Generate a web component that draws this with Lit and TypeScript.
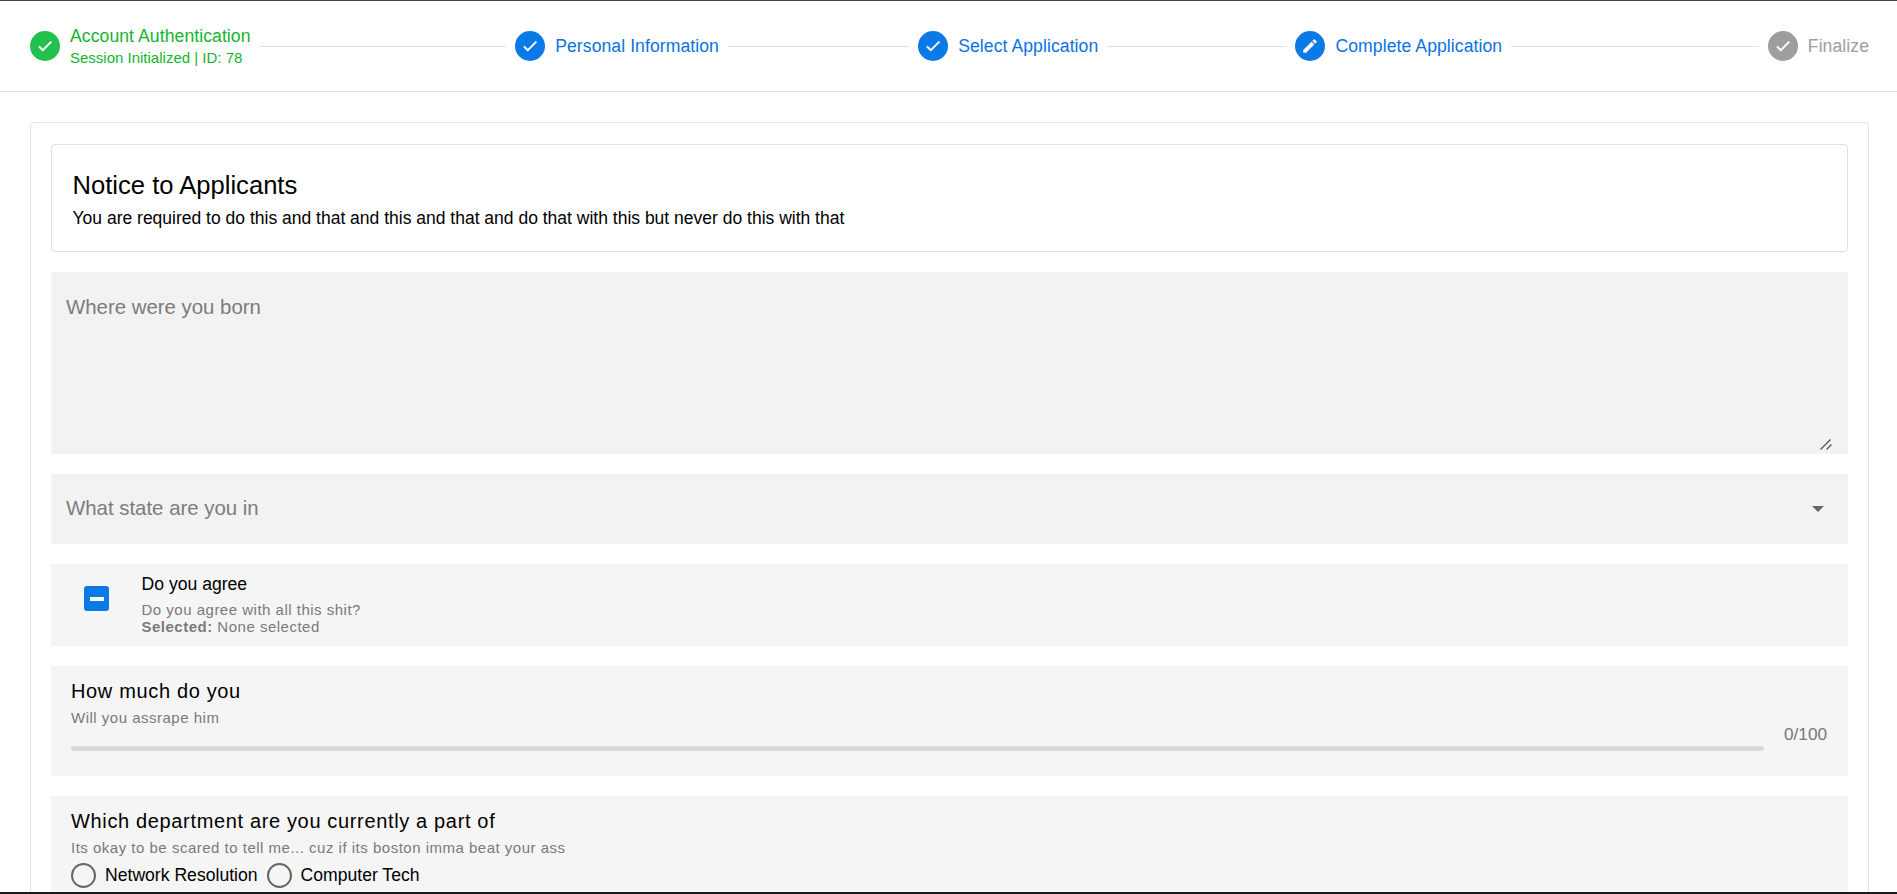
import { LitElement, html, css } from "lit";
import { customElement } from "lit/decorators.js";

const CHECK = html`<svg viewBox="0 0 24 24" width="18" height="18"><path fill="#fff" stroke="#fff" stroke-width="0.8" d="M9 16.2 4.8 12l-1.4 1.4L9 19 21 7l-1.4-1.4z"/></svg>`;
const PEN = html`<svg viewBox="0 0 24 24" width="18" height="18"><path fill="#fff" d="M3 17.25V21h3.75L17.81 9.94l-3.75-3.75zM20.71 7.04a1 1 0 0 0 0-1.41l-2.34-2.34a1 1 0 0 0-1.41 0l-1.83 1.83 3.75 3.75z"/></svg>`;
const GRIP = html`<svg class="grip" viewBox="0 0 12 11" width="12" height="11"><path fill="none" stroke="#555" stroke-width="1.3" d="M0.5 10.5 10.5 0.5M6.5 10.5 11.5 5.5"/></svg>`;

@customElement("app-root")
export class AppRoot extends LitElement {
  static styles = css`
    :host { display: flex; flex-direction: column; height: 894px; overflow: hidden; background: #fff; color: #000; font-family: "Liberation Sans", Arial, sans-serif; box-sizing: border-box; border-top: 1px solid #444; border-bottom: 2px solid #1a1a1a; }
    * { box-sizing: border-box; }
    .stepper { flex: none; height: 91px; display: flex; align-items: center; padding: 0 28px 0 30px; border-bottom: 1px solid #e0e0e0; }
    .step { display: flex; align-items: center; gap: 10px; flex: none; font-size: 17.6px; letter-spacing: 0.07px; }
    .icon { width: 30px; height: 30px; border-radius: 50%; display: flex; align-items: center; justify-content: center; }
    .line { height: 1px; background: #e0e0e0; margin: 0 9px; }
    .l1 { flex: 245 1 0; } .l2 { flex: 180 1 0; } .l3 { flex: 178 1 0; } .l4 { flex: 246 1 0; }
    .green { color: #12b52e; } .green .icon { background: #22c04f; }
    .blue { color: #0b73e0; } .blue .icon { background: #0b7ae6; }
    .gray { color: #9e9e9e; } .gray .icon { background: #9e9e9e; }
    .sub { font-size: 15px; margin-top: 2px; letter-spacing: 0; }
    .body { flex: 1; min-height: 0; padding: 30px 28px 0 30px; }
    .card { border: 1px solid #e3e3e3; border-radius: 4px; padding: 21px 20px 20px; display: flex; flex-direction: column; gap: 20px; }
    .notice { height: 108px; border: 1px solid #e0e0e0; border-radius: 4px; padding: 3px 20.5px 0; display: flex; flex-direction: column; justify-content: center; }
    .notice h1 { margin: 0; font-size: 25.6px; font-weight: 400; line-height: 28px; }
    .notice p { margin: 9px 0 0; font-size: 17.5px; line-height: 20px; }
    .area { position: relative; height: 182px; background: #f2f2f2; }
    textarea { display: block; width: 100%; height: 100%; border: 0; outline: 0; resize: none; background: transparent; padding: 24px 15px; font: 20.4px "Liberation Sans", Arial, sans-serif; margin: 0; }
    textarea::placeholder { color: #7c7c7c; }
    .grip { position: absolute; right: 16px; bottom: 4px; }
    .select { height: 70px; background: #f2f2f2; display: flex; align-items: center; justify-content: space-between; padding: 0 24px 2px 15px; font-size: 20.4px; color: #7c7c7c; }
    .arrow { width: 0; height: 0; margin-top: 2px; border-left: 6px solid transparent; border-right: 6px solid transparent; border-top: 6px solid #666; }
    .panel { background: #f5f5f5; }
    .agree { height: 82px; display: flex; padding-left: 33px; }
    .box { width: 25px; height: 25px; margin-top: 22px; border-radius: 3px; background: #0b7ae6; display: flex; align-items: center; justify-content: center; flex: none; }
    .box i { display: block; width: 14px; height: 4px; background: #fff; }
    .agree-text { margin-left: 32.5px; padding-top: 9px; }
    .agree-text .t { font-size: 17.6px; line-height: 22px; }
    .hint { font-size: 15px; color: #7a7a7a; letter-spacing: 0.5px; line-height: 18px; }
    .hint.first { margin-top: 6px; line-height: 17px; }
    .hint.second { line-height: 17px; }
    .slider { height: 110px; padding: 13px 20px 0; }
    .title { font-size: 20px; line-height: 24px; letter-spacing: 0.65px; }
    .panel .hint.cap { margin-top: 6px; }
    .track-row { display: flex; align-items: flex-start; gap: 20px; }
    .track { flex: 1; height: 5px; border-radius: 3px; background: #d9d9d9; margin-top: 19px; }
    .val { font-size: 17.2px; line-height: 20px; color: #777; width: 44px; margin-top: -3px; }
    .radio { padding: 13px 20px 20px; height: 140px; }
    .radios { display: flex; align-items: center; gap: 9px; margin-top: 6px; }
    .opt { display: flex; align-items: center; gap: 9px; font-size: 17.6px; }
    .circle { width: 25px; height: 25px; border-radius: 50%; border: 2px solid #666; flex: none; }
  `;

  private step(cls: string, icon: unknown, label: string, sub?: string) {
    return html`<div class="step ${cls}"><div class="icon">${icon}</div><div><div>${label}</div>${sub ? html`<div class="sub">${sub}</div>` : ""}</div></div>`;
  }

  render() {
    return html`
      <div class="stepper">
        ${this.step("green", CHECK, "Account Authentication", "Session Initialized | ID: 78")}
        <div class="line l1"></div>
        ${this.step("blue", CHECK, "Personal Information")}
        <div class="line l2"></div>
        ${this.step("blue", CHECK, "Select Application")}
        <div class="line l3"></div>
        ${this.step("blue", PEN, "Complete Application")}
        <div class="line l4"></div>
        ${this.step("gray", CHECK, "Finalize")}
      </div>
      <div class="body">
        <div class="card">
          <div class="notice">
            <h1>Notice to Applicants</h1>
            <p>You are required to do this and that and this and that and do that with this but never do this with that</p>
          </div>
          <div class="area"><textarea placeholder="Where were you born"></textarea>${GRIP}</div>
          <div class="select"><span>What state are you in</span><span class="arrow"></span></div>
          <div class="panel agree">
            <div class="box"><i></i></div>
            <div class="agree-text">
              <div class="t">Do you agree</div>
              <div class="hint first">Do you agree with all this shit?</div>
              <div class="hint second"><b>Selected:</b> None selected</div>
            </div>
          </div>
          <div class="panel slider">
            <div class="title">How much do you</div>
            <div class="hint cap">Will you assrape him</div>
            <div class="track-row"><div class="track"></div><div class="val">0/100</div></div>
          </div>
          <div class="panel radio">
            <div class="title">Which department are you currently a part of</div>
            <div class="hint cap">Its okay to be scared to tell me... cuz if its boston imma beat your ass</div>
            <div class="radios">
              <div class="opt"><span class="circle"></span>Network Resolution</div>
              <div class="opt"><span class="circle"></span>Computer Tech</div>
            </div>
          </div>
        </div>
      </div>
    `;
  }
}
